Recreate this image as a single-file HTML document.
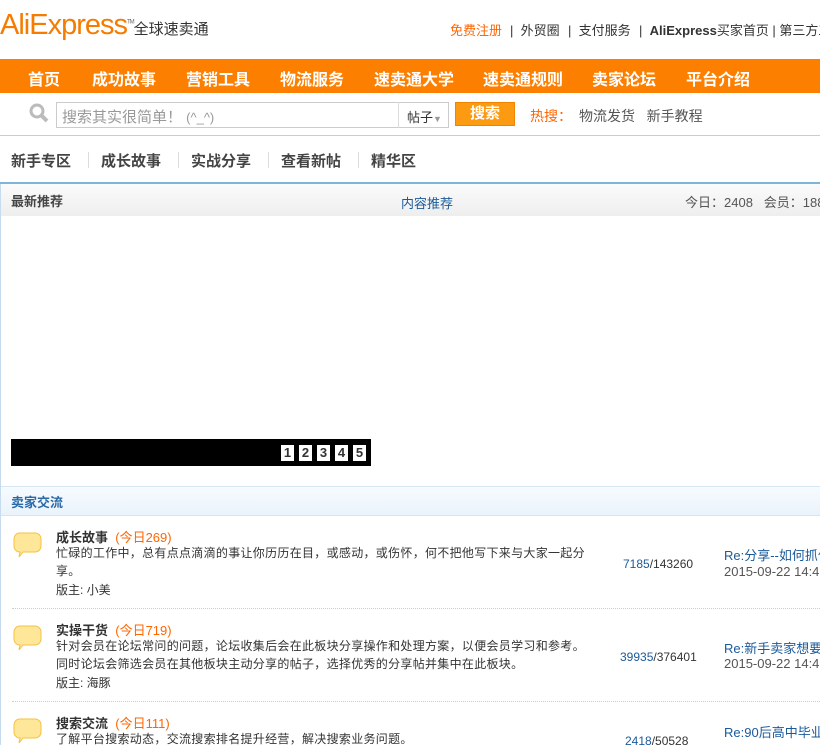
<!DOCTYPE html>
<html><head><meta charset="utf-8"><style>
*{margin:0;padding:0;box-sizing:border-box}
body{width:820px;height:745px;overflow:hidden;background:#fff;font-family:"Liberation Sans","Noto Sans CJK SC",sans-serif;font-size:12px;color:#333;position:relative}
.a{position:absolute;white-space:nowrap}
.logo{left:0;top:9px;font-size:29px;color:#f57c00;letter-spacing:-1px;font-family:"Liberation Sans",sans-serif}
.logo span{font-size:15px;color:#333;letter-spacing:0;font-family:"Noto Sans CJK SC",sans-serif}
.top{top:20px;font-size:13px;color:#333}
.nav{left:0;top:59px;width:820px;height:34px;background:#fd7f00}
.nav b{position:absolute;top:7px;color:#fff;font-size:16px;font-weight:bold}
.srow{left:0;top:93px;width:820px;height:43px;border-bottom:1px solid #ccc}
.sub{top:150px;font-size:15px;color:#444;font-weight:bold}
.sep{top:152px;width:1px;height:16px;background:#ddd}
.desc{left:56px;font-size:12px;letter-spacing:.3px;line-height:18px;white-space:normal;width:532px}
.pg{position:absolute;top:445px;width:13px;height:16px;background:#fff;color:#333;font-weight:bold;font-size:13px;text-align:center;line-height:16px}
</style></head><body>
<div class="a logo">AliExpress<sup style="font-size:6px;color:#666">TM</sup><span>全球速卖通</span></div>
<div class="a top" style="left:450px;color:#f60">免费注册</div>
<div class="a top" style="left:510px">|&nbsp; 外贸圈</div>
<div class="a top" style="left:568px">|&nbsp; 支付服务</div>
<div class="a top" style="left:639px">|&nbsp; <b style="color:#333">AliExpress</b>买家首页 | 第三方工</div>
<div class="a nav">
<b style="left:28px">首页</b><b style="left:92px">成功故事</b><b style="left:186px">营销工具</b><b style="left:280px">物流服务</b><b style="left:374px">速卖通大学</b><b style="left:483px">速卖通规则</b><b style="left:592px">卖家论坛</b><b style="left:686px">平台介绍</b>
</div>
<div class="a srow"></div>
<svg class="a" style="left:29px;top:103px" width="20" height="20"><circle cx="8" cy="8" r="6" fill="none" stroke="#bbb" stroke-width="3"/><line x1="12" y1="12" x2="18" y2="18" stroke="#bbb" stroke-width="4"/></svg>
<div class="a" style="left:56px;top:102px;width:393px;height:26px;border:1px solid #ccc"></div>
<div class="a" style="left:398px;top:102px;width:1px;height:26px;background:#ddd"></div>
<div class="a" style="left:62px;top:106px;font-size:15px;color:#999">搜索其实很简单！ <span style="font-size:13px">(^_^)</span></div>
<div class="a" style="left:407px;top:107px;font-size:13px;color:#333">帖子<span style="color:#999;font-size:9px">▼</span></div>
<div class="a" style="left:455px;top:102px;width:60px;height:24px;background:#fc9a12;border:1px solid #f08300;color:#fff;font-size:15px;font-weight:bold;text-align:center;line-height:21px">搜索</div>
<div class="a" style="left:530px;top:106px;font-size:14px;color:#f60">热搜：</div>
<div class="a" style="left:579px;top:106px;font-size:14px;color:#555">物流发货&nbsp;&nbsp; 新手教程</div>
<div class="a sub" style="left:11px">新手专区</div><div class="a sep" style="left:88px"></div>
<div class="a sub" style="left:101px">成长故事</div><div class="a sep" style="left:178px"></div>
<div class="a sub" style="left:191px">实战分享</div><div class="a sep" style="left:268px"></div>
<div class="a sub" style="left:281px">查看新帖</div><div class="a sep" style="left:358px"></div>
<div class="a sub" style="left:371px">精华区</div>
<div class="a" style="left:0;top:182px;width:820px;height:2px;background:#7fb5d8"></div>
<div class="a" style="left:0;top:184px;width:1px;height:561px;background:#c6dcee"></div>
<div class="a" style="left:1px;top:184px;width:819px;height:32px;background:linear-gradient(#fbfbfb,#eee)"></div>
<div class="a" style="left:11px;top:191px;font-weight:bold;color:#444;font-size:13px">最新推荐</div>
<div class="a" style="left:401px;top:193px;color:#1a5a9a;font-size:13px">内容推荐</div>
<div class="a" style="left:685px;top:192px;color:#555;font-size:13px">今日：2408&nbsp;&nbsp;&nbsp;会员：188</div>
<div class="a" style="left:11px;top:439px;width:360px;height:27px;background:#000"></div>
<div class="pg" style="left:281px">1</div><div class="pg" style="left:299px">2</div><div class="pg" style="left:317px">3</div><div class="pg" style="left:335px">4</div><div class="pg" style="left:353px">5</div>
<div class="a" style="left:1px;top:486px;width:819px;height:30px;background:linear-gradient(#f7fbfe,#eaf3fb);border-top:1px solid #d4e6f3;border-bottom:1px solid #d4e6f3"></div>
<div class="a" style="left:11px;top:492px;color:#2a6aa8;font-weight:bold;font-size:13px">卖家交流</div>

<svg class="a" style="left:12px;top:531px" width="32" height="28"><path d="M7 2h16a6 6 0 0 1 6 6v7a6 6 0 0 1-6 6H11l-4 5 1-5A6 6 0 0 1 2 15V8a6 6 0 0 1 5-6z" fill="#ffe79a" stroke="#f4c040"/></svg>
<div class="a" style="left:56px;top:527px;font-size:13px;font-weight:bold;color:#333">成长故事 &nbsp;<span style="color:#f60;font-weight:normal">(今日269)</span></div>
<div class="a desc" style="top:544px">忙碌的工作中，总有点点滴滴的事让你历历在目，或感动，或伤怀，何不把他写下来与大家一起分享。</div>
<div class="a" style="left:56px;top:581px;font-size:12px">版主: 小美</div>
<div class="a" style="left:623px;top:557px;color:#333"><span style="color:#1a5a9a">7185</span>/143260</div>
<div class="a" style="left:724px;top:545px;font-size:13px;color:#1a5a9a">Re:分享--如何抓住</div>
<div class="a" style="left:724px;top:564px;font-size:13px;color:#555">2015-09-22 14:45</div>
<div class="a" style="left:12px;top:608px;width:808px;border-top:1px dotted #ccc"></div>

<svg class="a" style="left:12px;top:624px" width="32" height="28"><path d="M7 2h16a6 6 0 0 1 6 6v7a6 6 0 0 1-6 6H11l-4 5 1-5A6 6 0 0 1 2 15V8a6 6 0 0 1 5-6z" fill="#ffe79a" stroke="#f4c040"/></svg>
<div class="a" style="left:56px;top:620px;font-size:13px;font-weight:bold;color:#333">实操干货 &nbsp;<span style="color:#f60;font-weight:normal">(今日719)</span></div>
<div class="a desc" style="top:637px">针对会员在论坛常问的问题，论坛收集后会在此板块分享操作和处理方案，以便会员学习和参考。同时论坛会筛选会员在其他板块主动分享的帖子，选择优秀的分享帖并集中在此板块。</div>
<div class="a" style="left:56px;top:674px;font-size:12px">版主: 海豚</div>
<div class="a" style="left:620px;top:650px;color:#333"><span style="color:#1a5a9a">39935</span>/376401</div>
<div class="a" style="left:724px;top:638px;font-size:13px;color:#1a5a9a">Re:新手卖家想要快</div>
<div class="a" style="left:724px;top:656px;font-size:13px;color:#555">2015-09-22 14:48</div>
<div class="a" style="left:12px;top:701px;width:808px;border-top:1px dotted #ccc"></div>

<svg class="a" style="left:12px;top:717px" width="32" height="28"><path d="M7 2h16a6 6 0 0 1 6 6v7a6 6 0 0 1-6 6H11l-4 5 1-5A6 6 0 0 1 2 15V8a6 6 0 0 1 5-6z" fill="#ffe79a" stroke="#f4c040"/></svg>
<div class="a" style="left:56px;top:713px;font-size:13px;font-weight:bold;color:#333">搜索交流 &nbsp;<span style="color:#f60;font-weight:normal">(今日111)</span></div>
<div class="a desc" style="top:730px">了解平台搜索动态，交流搜索排名提升经营，解决搜索业务问题。</div>
<div class="a" style="left:625px;top:734px;color:#333"><span style="color:#1a5a9a">2418</span>/50528</div>
<div class="a" style="left:724px;top:722px;font-size:13px;color:#1a5a9a">Re:90后高中毕业生</div>
</body></html>
